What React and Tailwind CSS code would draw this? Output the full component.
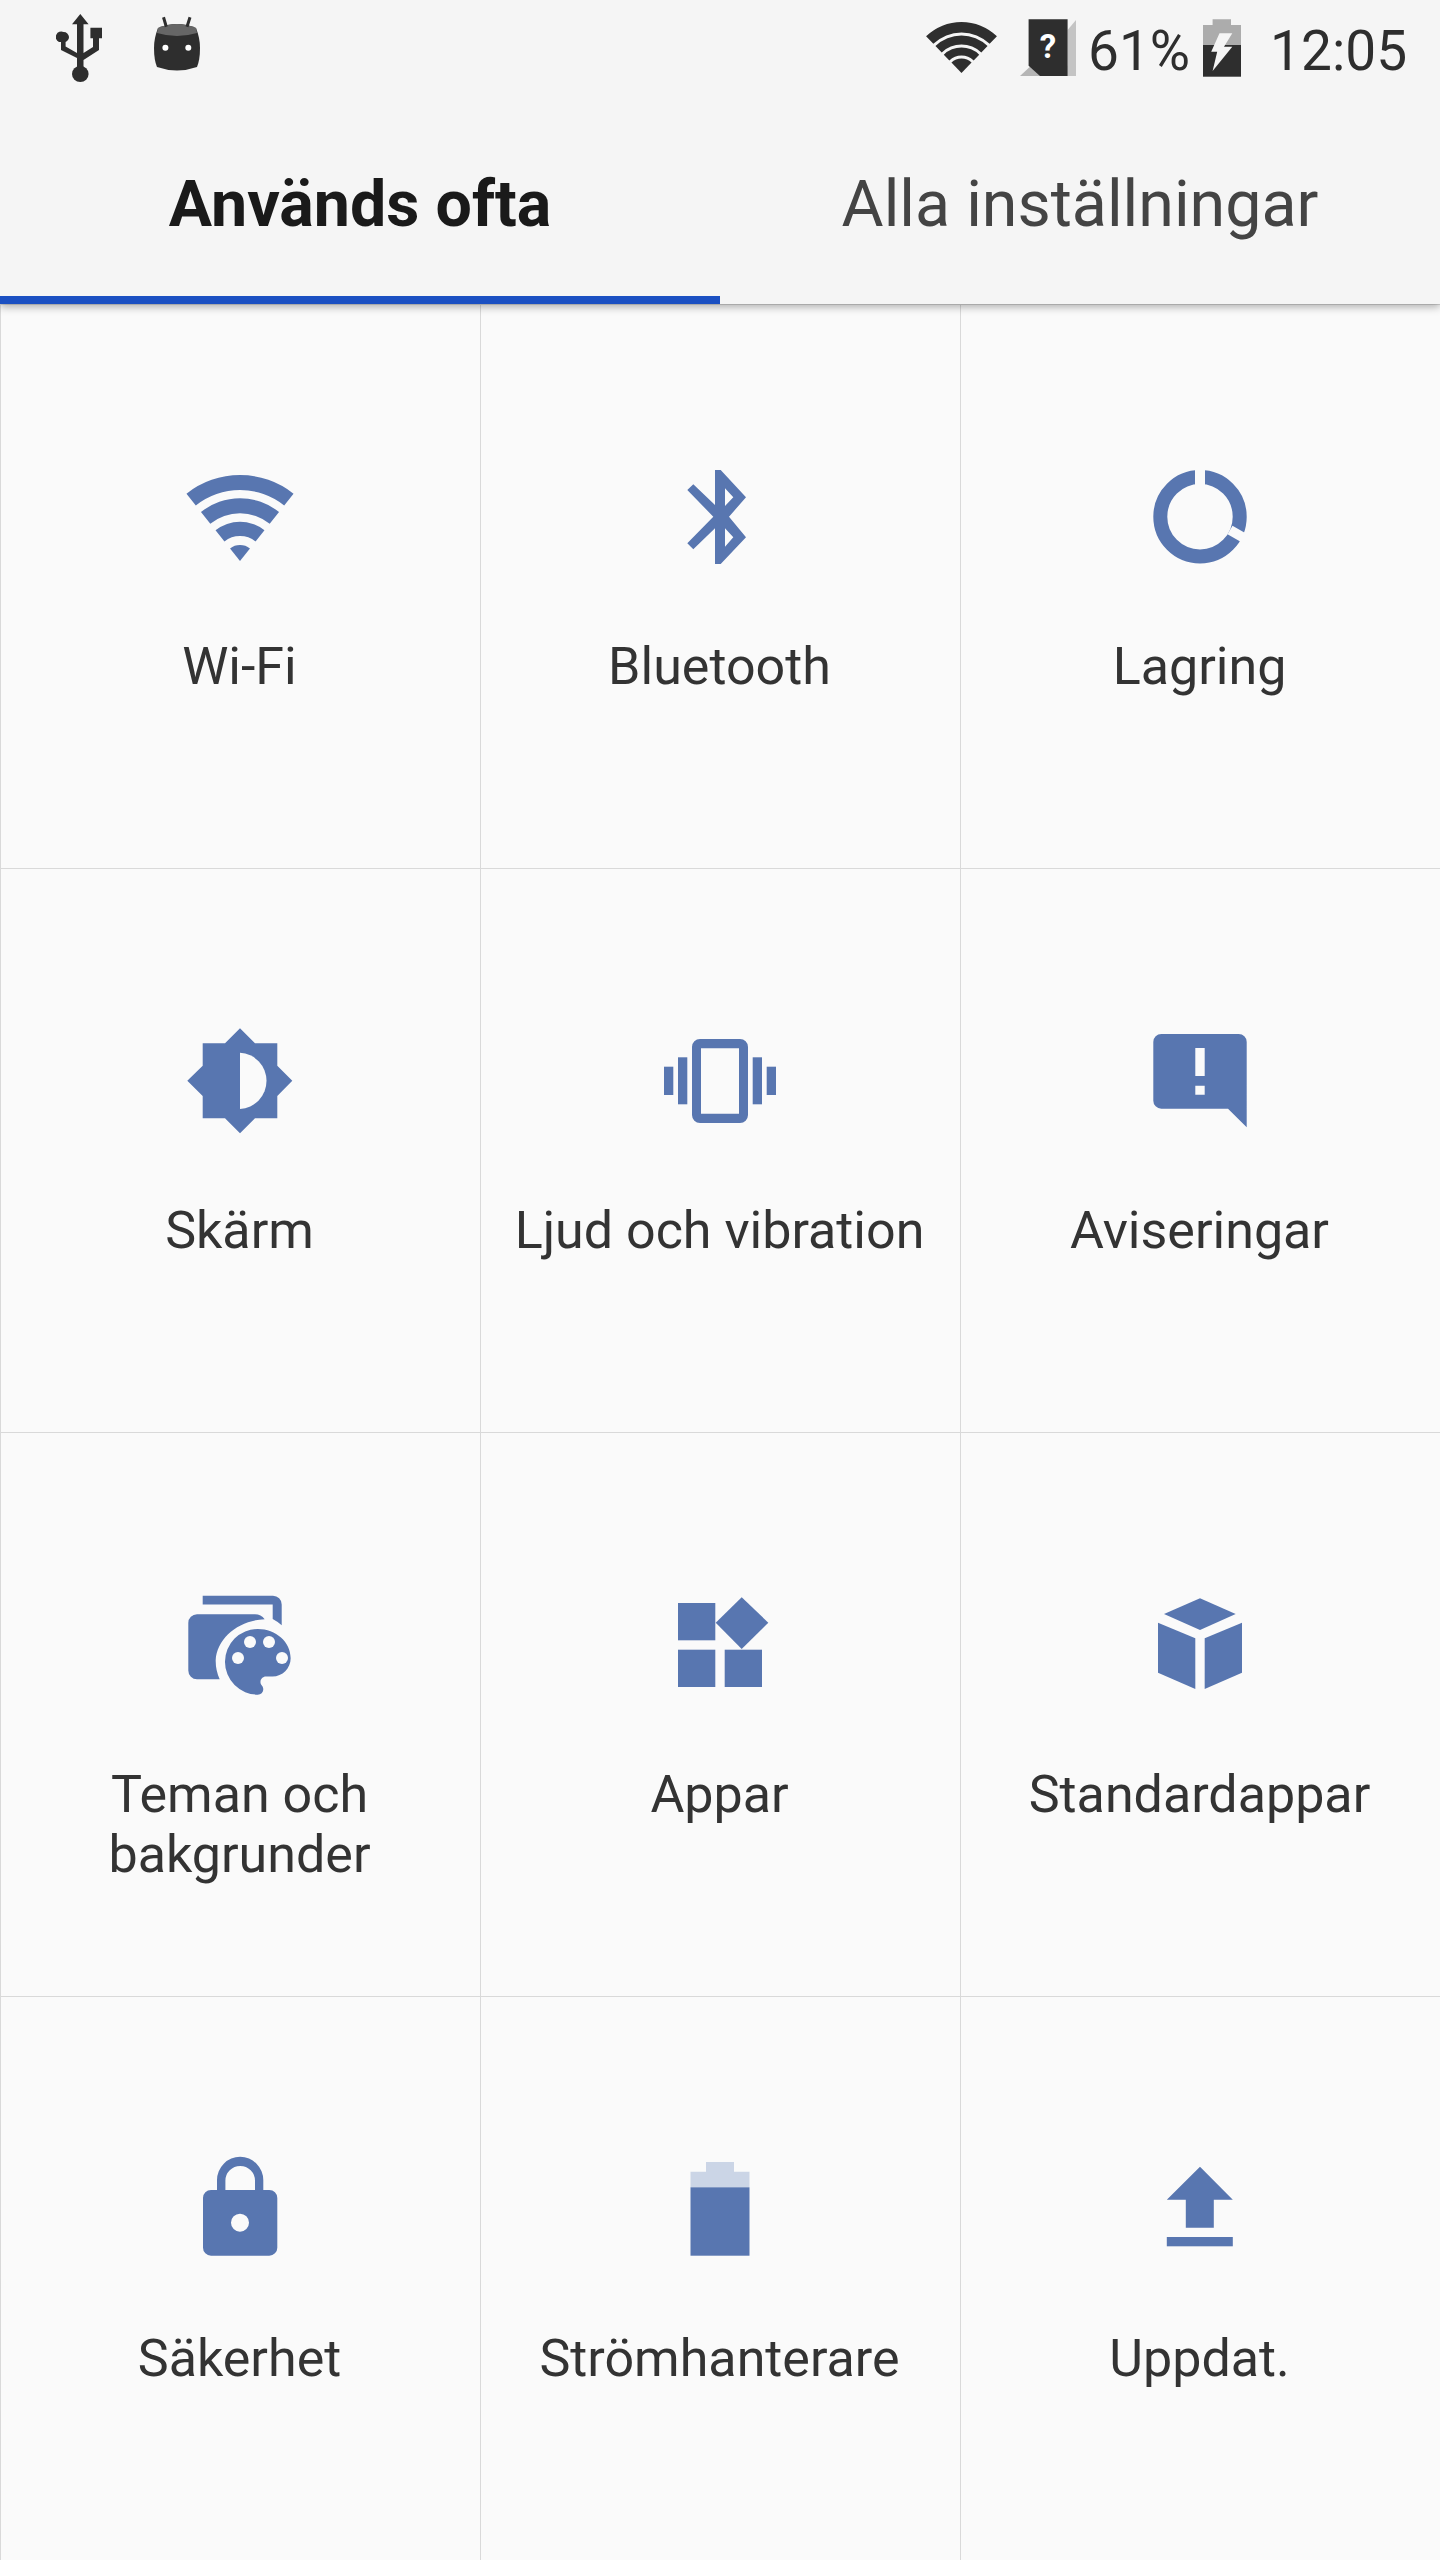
// Settings grid screen ("Används ofta" tab)
const BLUE = "#5876b0";
const BG = "#fafafa";

// one band of a wifi fan, apex at (cx, cy)
function band(cx, cy, r1, r2, deg) {
  const a = (deg * Math.PI) / 180;
  const s = Math.sin(a);
  const c = Math.cos(a);
  return [
    `M${cx - r1 * s} ${cy - r1 * c}`,
    `A${r1} ${r1} 0 0 1 ${cx + r1 * s} ${cy - r1 * c}`,
    `L${cx + r2 * s} ${cy - r2 * c}`,
    r2 > 0 ? `A${r2} ${r2} 0 0 0 ${cx - r2 * s} ${cy - r2 * c}` : "",
    "Z",
  ].join(" ");
}

function Box({ children }) {
  return (
    <svg width="128" height="128" viewBox="0 0 128 128" fill={BLUE}>
      {children}
    </svg>
  );
}

const WifiIcon = () => (
  <Box>
    <path d={band(64, 107, 86, 71, 38.5)} />
    <path d={band(64, 107, 62.7, 47.7, 38.5)} />
    <path d={band(64, 107, 39.3, 25, 38.5)} />
    <path d={band(64, 107, 16, 0, 38.5)} />
  </Box>
);

const BluetoothIcon = () => (
  <Box>
    <path
      fillRule="evenodd"
      d="M59 16H64.7L90 43.3L73 62.7L90 83.3L64.7 110H59V74.3L37.3 95.3L31.3 89.3L57.3 62.7L31.3 36L37.3 30.3L59 51ZM69 34.3V52L77.3 43.3ZM69 74.3V92.7L77.3 83.3Z"
    />
  </Box>
);

const StorageIcon = () => (
  <Box>
    <circle cx="64" cy="62.7" r="39.7" fill="none" stroke={BLUE} strokeWidth="14" />
    <rect x="59" y="10" width="10" height="22" fill={BG} />
    <path d="M96 76L110 84" stroke={BG} strokeWidth="10" transform="translate(-2 0)" />
  </Box>
);

const BrightnessIcon = () => (
  <Box>
    <path d="M64 10.3L79 25.3H101.3V47.7L116.3 62.7L101.3 78V100.3H79L64 115.3L49 100.3H26.7V78L11.3 62.7L26.7 47.7V25.3H49Z" />
    <path d="M64 34.7A28.2 28.2 0 0 1 64 91Z" fill={BG} />
  </Box>
);

const VibrateIcon = () => (
  <Box>
    <path
      fillRule="evenodd"
      d="M44 21H84A8 8 0 0 1 92 29V97A8 8 0 0 1 84 105H44A8 8 0 0 1 36 97V29A8 8 0 0 1 44 21ZM45 30.3V95.7H83V30.3Z"
    />
    <rect x="22" y="39.3" width="9.3" height="47" />
    <rect x="8" y="48.7" width="9.3" height="28.3" />
    <rect x="96.7" y="39.3" width="9.3" height="47" />
    <rect x="110.7" y="48.7" width="9.3" height="28.3" />
  </Box>
);

const NoticeIcon = () => (
  <Box>
    <path
      fillRule="evenodd"
      d="M25.3 16H102.7A8 8 0 0 1 110.7 24V109.3L92 90.7H25.3A8 8 0 0 1 17.3 82.7V24A8 8 0 0 1 25.3 16ZM59.3 30V58H68.7V30ZM59.3 67.7V76.7H68.7V67.7Z"
    />
  </Box>
);

const ThemeIcon = () => (
  <Box>
    <path d="M26.7 13.7H97A8.7 8.7 0 0 1 105.7 22.4V43.3Q101.5 39.5 96.7 37V22.4H26.7Z" />
    <path d="M21 32.3H79Q85 32.3 88.7 37.3C63 38 41 56 39.7 78Q39.5 88 43.7 97.3H21A8.7 8.7 0 0 1 12.3 88.6V41A8.7 8.7 0 0 1 21 32.3Z" />
    <g transform="translate(38 36) scale(3.65)">
      <path d="M12 3a9 9 0 0 0 0 18c.83 0 1.5-.67 1.5-1.5 0-.39-.15-.74-.39-1.01-.23-.26-.38-.61-.38-.99 0-.83.67-1.5 1.5-1.5H16c2.76 0 5-2.24 5-5 0-4.42-4.03-8-9-8z" />
    </g>
    <circle cx="62" cy="76" r="6" fill={BG} />
    <circle cx="74" cy="60" r="6" fill={BG} />
    <circle cx="93" cy="60" r="6" fill={BG} />
    <circle cx="106" cy="76" r="6" fill={BG} />
  </Box>
);

const AppsIcon = () => (
  <Box>
    <rect x="22" y="21" width="37.3" height="37.3" />
    <rect x="22" y="67.7" width="37.3" height="37.3" />
    <rect x="68.7" y="67.7" width="37.3" height="37.3" />
    <path d="M85.7 15.3L112.3 40.7L85.7 67L59.7 40.7Z" />
  </Box>
);

const CubeIcon = () => (
  <Box>
    <path d="M64 16.3L99.7 32L64 48L28 32Z" />
    <path d="M22 40.7L59.3 56.3V107L22 90.7Z" />
    <path d="M106 40.7L68.7 56.3V107L106 90.7Z" />
  </Box>
);

const LockIcon = () => (
  <Box>
    <path d="M41 44V34A23 23 0 0 1 87.3 34V44H79V34.7A14.8 14.8 0 0 0 49.4 34.7V44Z" />
    <path
      fillRule="evenodd"
      d="M35 44H93.3A8 8 0 0 1 101.3 52V101.7A8 8 0 0 1 93.3 109.7H35A8 8 0 0 1 27 101.7V52A8 8 0 0 1 35 44ZM64 67.7A9 9 0 1 0 64 85.7A9 9 0 1 0 64 67.7Z"
    />
  </Box>
);

const BatteryIcon = () => (
  <Box>
    <path d="M50 16H78V25.7H93.5V41.3H34.5V25.7H50Z" fill="#cbd5e6" />
    <rect x="34.5" y="41.3" width="59" height="68.4" />
  </Box>
);

const UpdateIcon = () => (
  <Box>
    <path d="M64 20.7L96.8 53.7H77.8V81.7H49.8V53.7H30.8Z" />
    <rect x="30.8" y="91" width="66" height="9.3" />
  </Box>
);

const items = [
  { label: "Wi-Fi", Icon: WifiIcon },
  { label: "Bluetooth", Icon: BluetoothIcon },
  { label: "Lagring", Icon: StorageIcon },
  { label: "Skärm", Icon: BrightnessIcon },
  { label: "Ljud och vibration", Icon: VibrateIcon },
  { label: "Aviseringar", Icon: NoticeIcon },
  { label: "Teman och bakgrunder", Icon: ThemeIcon },
  { label: "Appar", Icon: AppsIcon },
  { label: "Standardappar", Icon: CubeIcon },
  { label: "Säkerhet", Icon: LockIcon },
  { label: "Strömhanterare", Icon: BatteryIcon },
  { label: "Uppdat.", Icon: UpdateIcon },
];

function StatusBar() {
  return (
    <div className="flex h-[100px] items-start text-[#2e2e2e]">
      <svg width="48" height="72" viewBox="0 0 48 72" fill="#2e2e2e" className="ml-[56px] mt-[12px]">
        <path d="M24.3 2L32.6 12.3H27.5V41L37 35V26.3H34.4V15.7H46V26.3H43V38L27.5 48V56H21V46L5 38V30H3A5.3 5.3 0 0 1 7.6 20A5.3 5.3 0 0 1 13 25Q13 28 9.6 30V34.5L21 41V12.3H16Z" />
        <ellipse cx="24.3" cy="62" rx="8.3" ry="8" />
      </svg>
      <svg width="48" height="60" viewBox="0 0 48 60" className="ml-[49px] mt-[14px]">
        <path d="M5 14Q24 6 43 14Q47 24 47 34Q47 46 44 53Q24 60 4 53Q1 46 1 34Q1 24 5 14Z" fill="#2e2e2e" />
        <path d="M5 14Q24 6 43 14L44 19Q24 25 4 19Z" fill="#666666" />
        <path d="M10.5 3.3L13.3 12.7M37 3.3L34 12.7" stroke="#2e2e2e" strokeWidth="3" />
        <circle cx="12.4" cy="33.7" r="3" fill="#ffffff" />
        <circle cx="35.3" cy="33.7" r="3" fill="#ffffff" />
      </svg>
      <svg width="74" height="56" viewBox="0 0 74 56" fill="#2e2e2e" className="ml-[724px] mt-[20px]">
        <path d={band(36.5, 53, 51, 40.5, 44)} />
        <path d={band(36.5, 53, 37.5, 28.5, 44)} />
        <path d={band(36.5, 53, 25.5, 17.5, 44)} />
        <path d={band(36.5, 53, 14.5, 0, 44)} />
      </svg>
      <svg width="57" height="58" viewBox="0 0 57 58" className="ml-[21px] mt-[19px]">
        <path d="M0 57L11 46.7L21 57Z" fill="#b5b5b5" />
        <path d="M47.6 11L56 1V57H47.6Z" fill="#c4c4c4" />
        <path d="M8.6 0.3H47.6V57H20L8.6 46.7Z" fill="#2e2e2e" />
        <text x="28" y="39" fontSize="33" fontWeight="700" fill="#ffffff" textAnchor="middle" fontFamily="Roboto, sans-serif">?</text>
      </svg>
      <span className="ml-[11px] mt-[18px] text-[55px] leading-[66px]">61%</span>
      <svg width="38" height="58" viewBox="0 0 38 58" className="ml-[13px] mt-[19px]">
        <path d="M9.6 0.3H28V6H38V26H0V6H9.6Z" fill="#acacac" />
        <rect x="0" y="26" width="38" height="31.7" fill="#2e2e2e" />
        <path d="M16.5 14.3H29.3L21 27.7H29.3L9.6 52L14.2 32.7H8.2Z" fill="#f5f5f5" />
      </svg>
      <span className="ml-[29px] mt-[18px] text-[55px] leading-[66px]">12:05</span>
    </div>
  );
}

export default function App() {
  return (
    <div className="w-[1440px] h-[2560px] overflow-hidden bg-[#fafafa] [font-family:Roboto,sans-serif]">
      <header className="relative z-10 h-[304px] bg-[#f5f5f5] shadow-[0_3px_8px_rgba(0,0,0,0.3)]">
        <StatusBar />
        <div className="flex h-[204px]">
          <div className="flex w-[720px] items-center justify-center border-b-8 border-[#1b50c2] pt-3 text-[64.5px] font-bold text-[#1a1a1a]">
            Används ofta
          </div>
          <div className="flex w-[720px] items-center justify-center pt-1 text-[64.5px] text-[#444444]">
            Alla inställningar
          </div>
        </div>
      </header>
      <main className="grid grid-cols-3 auto-rows-[564px]">
        {items.map(({ label, Icon }) => (
          <div
            key={label}
            className="flex flex-col items-center border-t border-l border-[#d9d9d9] pt-[149px] pr-[2px] text-center"
          >
            <Icon />
            <p className="mt-[55px] w-[440px] text-[52px] leading-[60px] text-[#333333]">{label}</p>
          </div>
        ))}
      </main>
    </div>
  );
}
